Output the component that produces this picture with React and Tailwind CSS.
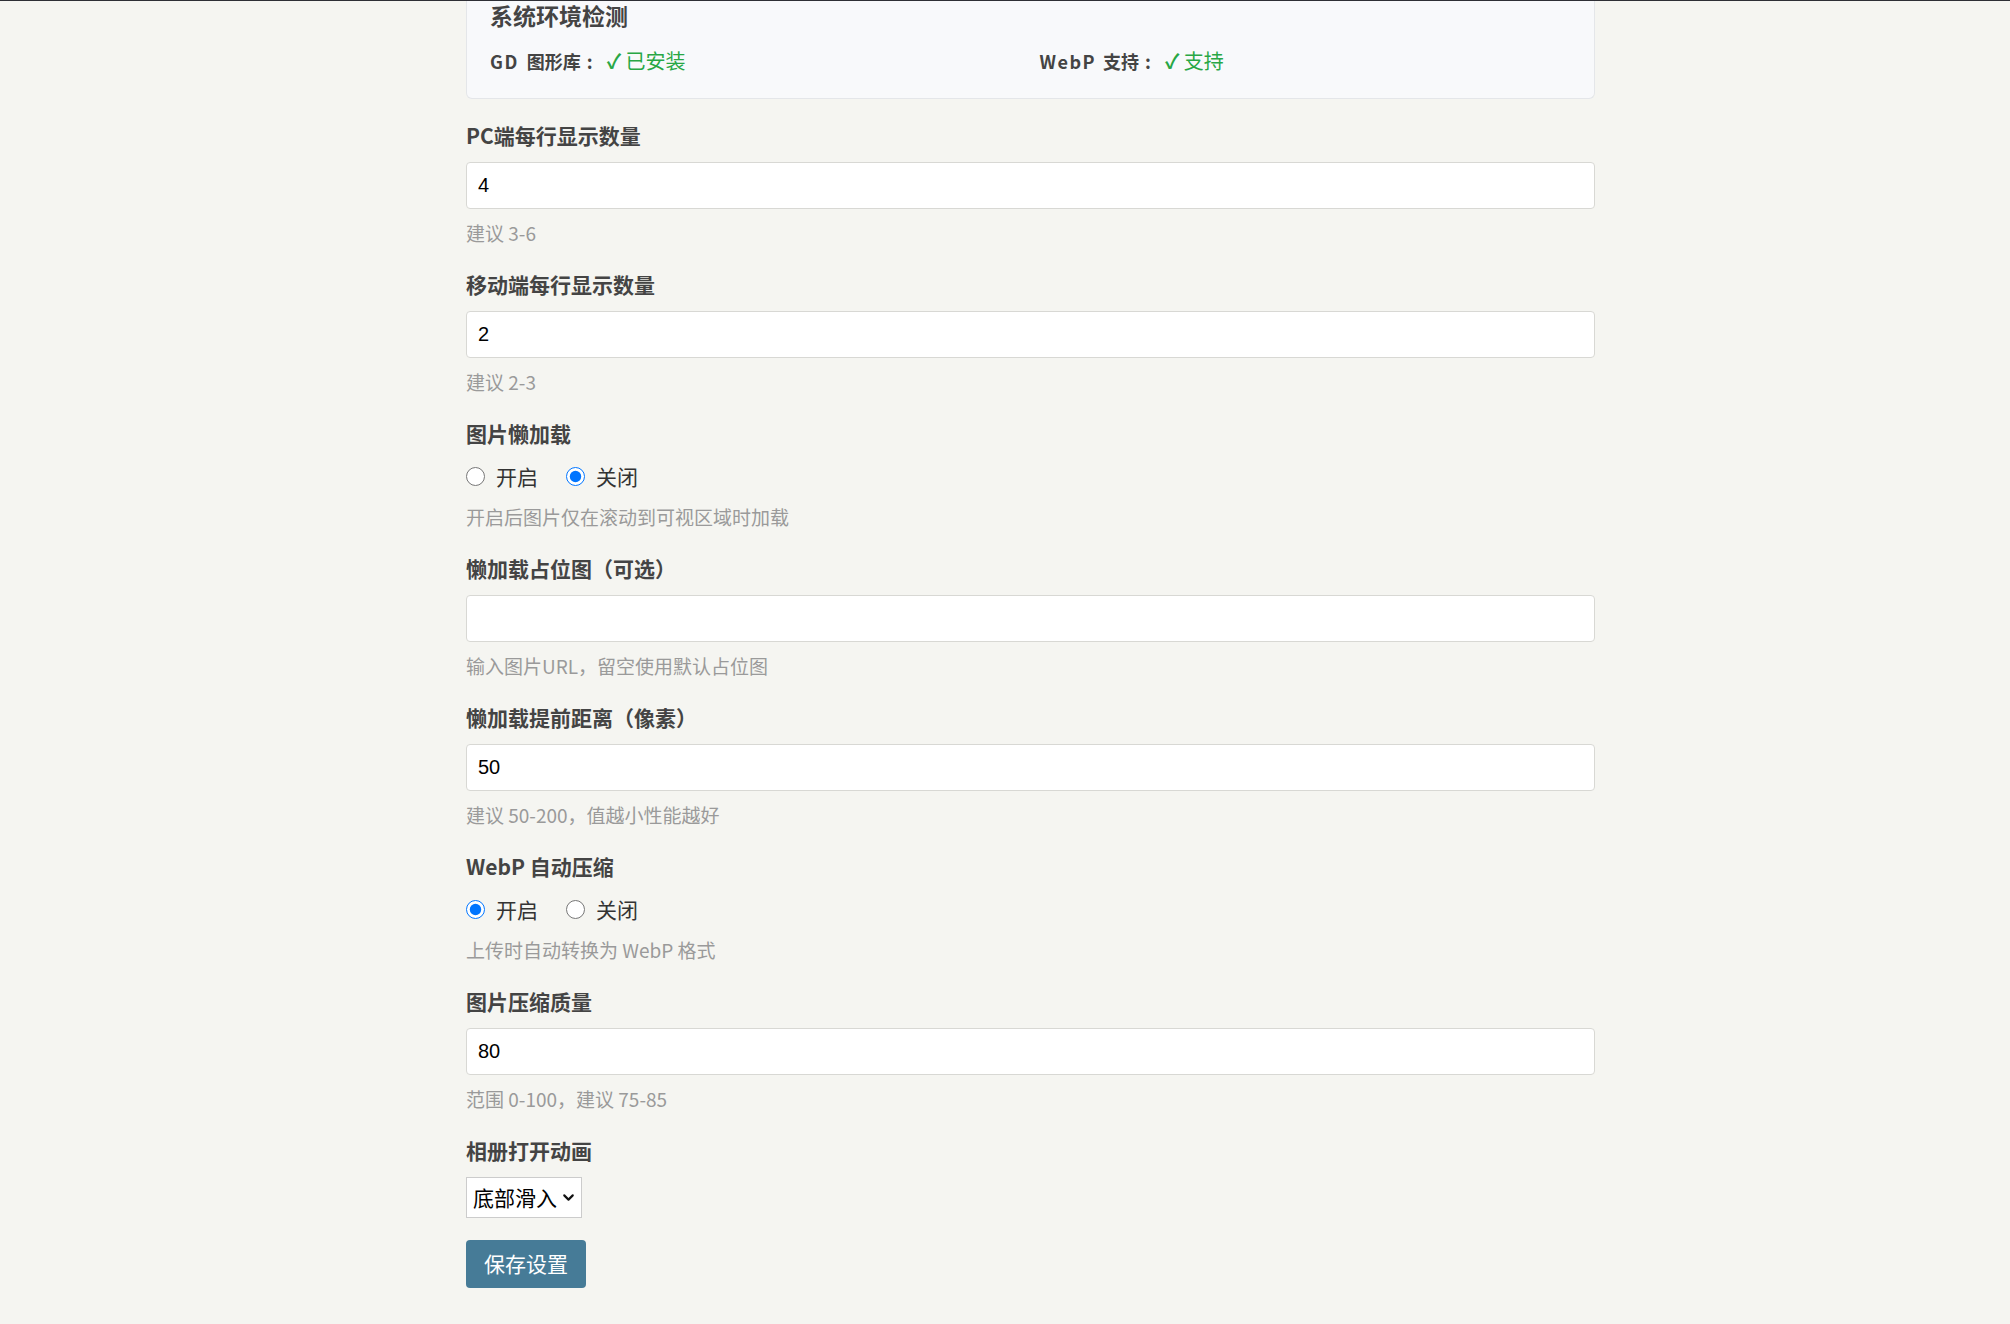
import { ChevronDown } from 'lucide-react';

const groups = [
  { type: 'input', label: 'PC端每行显示数量', value: '4', hint: '建议 3-6' },
  { type: 'input', label: '移动端每行显示数量', value: '2', hint: '建议 2-3' },
  { type: 'radio', name: 'lazy', label: '图片懒加载', checked: 'off', hint: '开启后图片仅在滚动到可视区域时加载' },
  { type: 'input', label: '懒加载占位图（可选）', value: '', hint: '输入图片URL，留空使用默认占位图' },
  { type: 'input', label: '懒加载提前距离（像素）', value: '50', hint: '建议 50-200，值越小性能越好' },
  { type: 'radio', name: 'webp', label: 'WebP 自动压缩', checked: 'on', hint: '上传时自动转换为 WebP 格式' },
  { type: 'input', label: '图片压缩质量', value: '80', hint: '范围 0-100，建议 75-85' },
];

function Label({ children }) {
  return (
    <label className="block text-[21px] leading-[30px] font-bold text-[#444] mb-[12px]">{children}</label>
  );
}

function Hint({ children }) {
  return <p className="mt-[10px] text-[19px] leading-[28px] text-[#9a9a9a]">{children}</p>;
}

function Radio({ name, checked }) {
  return (
    <div className="flex items-center h-[33px] text-[21px] text-[#333]">
      <label className="flex items-center">
        <input type="radio" name={name} defaultChecked={checked === 'on'} className="w-[19px] h-[19px] m-0 accent-[#0075ff]" />
        <span className="ml-[11px]">开启</span>
      </label>
      <label className="flex items-center ml-[28px]">
        <input type="radio" name={name} defaultChecked={checked === 'off'} className="w-[19px] h-[19px] m-0 accent-[#0075ff]" />
        <span className="ml-[11px]">关闭</span>
      </label>
    </div>
  );
}

// 环境检测的一项
function EnvItem({ latin, tracking, gap, name, value }) {
  return (
    <div className="flex items-baseline h-[28px]">
      <span className="text-[18px] font-bold text-[#444]">
        <span className={tracking}>{latin}</span>
        <span className={gap}>{name}</span>
        <span className="ml-[6px]">:</span>
      </span>
      <span className="ml-[14px] text-[20px] text-[#28a745]">
        <span className="font-bold">✓</span> {value}
      </span>
    </div>
  );
}

export default function App() {
  return (
    <div className="min-h-screen bg-[#f5f5f1] font-['Noto_Sans_CJK_SC','Noto_Sans',sans-serif]">
      <div className="h-px bg-[#2e2f35]"></div>

      <div className="ml-[466px] w-[1129px] pb-[36px]">
        {/* 系统环境检测 */}
        <div className="bg-[#f8f9fb] border border-t-0 border-[#e4e6e9] rounded-b-[6px] px-[23px] pb-[23px]">
          <h3 className="text-[23px] leading-[28px] font-bold text-[#444] mb-[18px]">系统环境检测</h3>
          <div className="grid grid-cols-2 gap-x-[18px] leading-[28px]">
            <EnvItem latin="GD" tracking="tracking-[1.5px]" gap="ml-[8px]" name="图形库" value="已安装" />
            <EnvItem latin="WebP" tracking="tracking-[1.5px]" gap="ml-[7px]" name="支持" value="支持" />
          </div>
        </div>

        <form className="mt-[21px]">
          {groups.map((g) => (
            <div key={g.label} className="mb-[22px]">
              <Label>{g.label}</Label>
              {g.type === 'input' ? (
                <input
                  type="text"
                  defaultValue={g.value}
                  className="block w-full h-[47px] bg-white border border-[#d8d8d4] rounded-[4px] px-[11px] text-[20px] text-black font-['Liberation_Sans',sans-serif] outline-none"
                />
              ) : (
                <Radio name={g.name} checked={g.checked} />
              )}
              <Hint>{g.hint}</Hint>
            </div>
          ))}

          <div className="mb-[22px]">
            <Label>相册打开动画</Label>
            <div className="relative w-[116px]">
              <select
                defaultValue="bottom"
                className="appearance-none block w-[116px] h-[41px] bg-white border border-[#cccccc] pl-[6px] pr-[24px] text-[21px] text-black outline-none"
              >
                <option value="bottom">底部滑入</option>
                <option value="fade">淡入淡出</option>
                <option value="zoom">缩放弹出</option>
              </select>
              <ChevronDown size={17} strokeWidth={3} className="absolute right-[5px] top-[12px] text-[#111] pointer-events-none" />
            </div>
          </div>

          <button
            type="button"
            className="block w-[120px] h-[48px] bg-[#467b97] text-white text-[21px] rounded-[4px]"
          >
            保存设置
          </button>
        </form>
      </div>
    </div>
  );
}
